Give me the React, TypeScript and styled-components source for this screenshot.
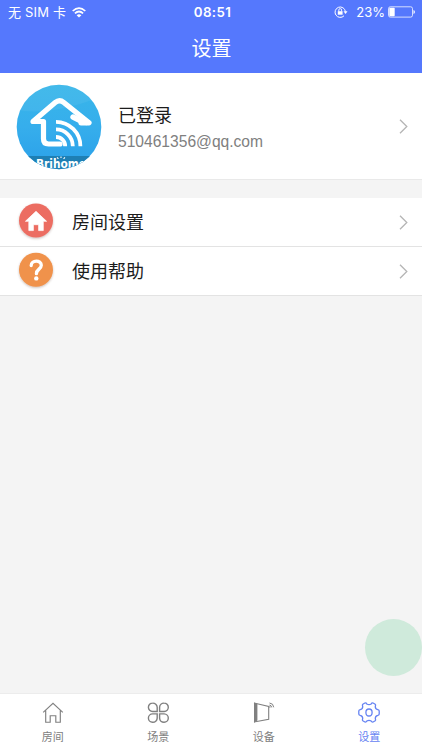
import React from "react";
import styled, { createGlobalStyle } from "styled-components";

const Global = createGlobalStyle`
  * { box-sizing: border-box; }
  html, body { margin: 0; padding: 0; }
  body {
    background: #f4f4f4;
    font-family: "Liberation Sans", "Noto Sans CJK SC", sans-serif;
    overflow: hidden;
  }
  svg { display: block; flex: none; }
`;

const Screen = styled.div`
  width: 422px;
  height: 750px;
  display: flex;
  flex-direction: column;
  position: relative;
  background: #f4f4f4;
`;

const Header = styled.header`
  height: 73px;
  background: #5578fd;
  color: #fff;
`;

const StatusBar = styled.div`
  height: 24px;
  padding: 0 7px 0 8px;
  display: grid;
  grid-template-columns: 1fr auto 1fr;
  align-items: center;
  line-height: 24px;
`;

const StatusGroup = styled.div<{ $end?: boolean }>`
  display: flex;
  align-items: center;
  justify-content: ${(p) => (p.$end ? "flex-end" : "flex-start")};
`;

const Carrier = styled.span`
  font-family: Inter, "Noto Sans CJK SC", sans-serif;
  font-size: 13px;
  letter-spacing: 0.2px;
  margin-right: 6px;
  white-space: nowrap;
`;

const Clock = styled.span`
  font: 600 13.3px/24px Inter, sans-serif;
  letter-spacing: 0.4px;
  padding-left: 2px;
`;

const Percent = styled.span`
  font: 400 13px/24px Inter, sans-serif;
  margin: 0 3px 0 8px;
`;

const Title = styled.h1`
  margin: 0;
  padding: 1px 0 0 1px;
  font-size: 20px;
  font-weight: 400;
  line-height: 49px;
  text-align: center;
`;

const Profile = styled.section`
  height: 107px;
  padding: 1px 14px 0 16px;
  display: flex;
  align-items: center;
  background: #fff;
  border-bottom: 1px solid #e9e9e9;
`;

const ProfileText = styled.div`
  flex: 1;
  padding: 3px 0 0 16px;
`;

const LoginState = styled.div`
  font-size: 18px;
  line-height: 27px;
  color: #1c1c1c;
`;

const Email = styled.div`
  font-size: 15.6px;
  line-height: 24px;
  color: #808080;
`;

const Menu = styled.nav`
  margin-top: 18px;
  background: #fff;
`;

const MenuRow = styled.div`
  height: 49px;
  padding: 0 14px 0 16px;
  display: flex;
  align-items: center;
  border-bottom: 1px solid #e3e3e3;
`;

const MenuLabel = styled.span`
  flex: 1;
  padding: 2px 0 0 16px;
  font-size: 18px;
  line-height: 27px;
  color: #1c1c1c;
`;

const FloatingDot = styled.div`
  position: absolute;
  left: 365px;
  top: 619px;
  width: 57px;
  height: 57px;
  border-radius: 50%;
  background: #cfeadb;
`;

const TabBar = styled.nav`
  height: 57px;
  margin-top: auto;
  display: grid;
  grid-template-columns: repeat(4, 1fr);
  background: #fff;
  border-top: 1px solid #ececec;
`;

const Tab = styled.div<{ $active?: boolean }>`
  display: flex;
  flex-direction: column;
  align-items: center;
  padding-top: 7px;
  color: ${(p) => (p.$active ? "#6583f2" : "#808080")};
`;

const TabLabel = styled.span`
  font-size: 11px;
  line-height: 16px;
  margin-top: 5px;
`;

const Wifi = () => (
  <svg width="14" height="11" viewBox="0 0 14 11" fill="none" stroke="#fff" strokeWidth="1.7">
    <path d="M.7 4Q7-1.9 13.3 4" />
    <path d="M2.9 6.4Q7 2.6 11.1 6.4" />
    <path d="M7 10.6 4.6 8.2Q7 6.2 9.4 8.2Z" fill="#fff" stroke="none" />
  </svg>
);

const RotationLock = () => (
  <svg width="14" height="12" viewBox="0 0 14 12" fill="none" stroke="#fff">
    <path d="M10 9.8A5.2 5.2 0 1 1 11.4 5.5" strokeWidth="1" />
    <path d="M9.5 5.3h4l-2 2.6Z" fill="#fff" stroke="none" />
    <path d="M3.8 5.2h4.8v3.5H3.8z" fill="#fff" stroke="none" />
    <path d="M4.8 5.4V4a1.4 1.4 0 0 1 2.8 0v1.4" strokeWidth=".9" />
  </svg>
);

const Battery = () => (
  <svg width="27" height="12" viewBox="0 0 27 12" fill="none">
    <rect x=".5" y=".8" width="24" height="10.3" rx="1.8" stroke="#fff" strokeOpacity=".75" />
    <rect x="1.3" y="1.7" width="5.4" height="8.5" rx=".8" fill="#fff" />
    <path d="M25.5 4q1.4.5 1.4 2t-1.4 2Z" fill="#fff" />
  </svg>
);

const Avatar = () => (
  <svg width="86" height="86" viewBox="0 0 86 86">
    <defs>
      <linearGradient id="sky" x1="0" y1="0" x2="0" y2="1">
        <stop offset="0" stopColor="#38b6e9" />
        <stop offset=".5" stopColor="#36aeec" />
        <stop offset="1" stopColor="#2a9fe9" />
      </linearGradient>
      <clipPath id="disc">
        <circle cx="43" cy="43" r="42.3" />
      </clipPath>
    </defs>
    <g clipPath="url(#disc)">
      <rect width="86" height="86" fill="url(#sky)" />
      <path d="M0 26Q38 32 86 12V0H0Z" fill="#fff" opacity=".06" />
      <rect y="72" width="86" height="14" fill="#1e7fb4" />
      <g fill="none" stroke="#fff" strokeLinecap="round" strokeLinejoin="round">
        <path d="M44 60H32.5Q27.5 60 27.5 55V37.5H17L39.2 18.6Q43.5 15 47.8 18.6L73 38.8H65" strokeWidth="5.2" />
        <path d="M57 33 66 37.5 70 38.5" strokeWidth="5.4" />
        <g strokeWidth="3.8" strokeLinecap="butt">
          <path d="M40 53A9.2 9.2 0 0 1 49.2 62.2" />
          <path d="M40 45.4A16.8 16.8 0 0 1 56.8 62.2" />
          <path d="M40 37.8A24.4 24.4 0 0 1 64.4 62.2" />
        </g>
      </g>
      <g fill="#fff">
        <text x="20" y="83.5" fontFamily="DejaVu Sans" fontWeight="700" fontSize="11.5" textLength="50" lengthAdjust="spacingAndGlyphs">Brihome</text>
        <path d="M42.4 74.8 41.1 73.4M45 74V72.4M47.6 74.8 48.9 73.4" stroke="#fff" strokeWidth="1.1" />
      </g>
    </g>
  </svg>
);

const IconShadow = () => (
  <filter id="lift" x="-20%" y="-20%" width="140%" height="150%">
    <feDropShadow dx="0" dy="1.1" stdDeviation=".9" floodColor="#58352a" floodOpacity=".32" />
  </filter>
);

const RoomBadge = () => (
  <svg width="40" height="40" viewBox="0 0 40 40">
    <IconShadow />
    <circle cx="20" cy="18.5" r="17" fill="#ec6d62" filter="url(#lift)" />
    <path d="M20 9.3 9.4 19.3H12.8V28.6H17.4V22.7H22.6V28.6H27.3V19.3H30.6Z" fill="#fff" stroke="#fff" strokeWidth=".7" strokeLinejoin="round" />
  </svg>
);

const HelpBadge = () => (
  <svg width="40" height="40" viewBox="0 0 40 40">
    <circle cx="20" cy="18.8" r="17" fill="#f0924b" filter="url(#lift)" />
    <path d="M15.2 14.5C15.2 8.7 25.3 8.5 25.3 14.3C25.3 18.3 20.4 18 20.4 22.7" fill="none" stroke="#fff" strokeWidth="3.3" strokeLinecap="round" />
    <circle cx="20.3" cy="27.4" r="2.2" fill="#fff" />
  </svg>
);

const Chevron = () => (
  <svg width="9" height="15" viewBox="0 0 9 15" fill="none" stroke="#b5b5b5" strokeWidth="1.3">
    <path d="m1 .8 6.8 6.7L1 14.2" />
  </svg>
);

const HomeIcon = () => (
  <svg width="22" height="23" viewBox="0 0 22 23" fill="none" stroke="currentColor" strokeWidth="1.15">
    <path d="M1.2 11.3 11 2.3l9.8 9M3.7 9.3v11.9h4.5v-6.5h5.6v6.5h4.5V9.3" />
  </svg>
);

const SceneIcon = () => (
  <svg width="22" height="23" viewBox="0 0 22 23" fill="none" stroke="currentColor" strokeWidth="1.4">
    <path d="M10.2 10.5H5.6A4.2 4.2 0 0 1 1.4 6.3 4.2 4.2 0 0 1 5.6 2.1 4.4 4.4 0 0 1 10.2 6.3Z" />
    <path d="M12.6 10.5h4.6A4.2 4.2 0 0 0 21.3 6.3 4.2 4.2 0 0 0 17.1 2.1 4.4 4.4 0 0 0 12.6 6.3Z" />
    <path d="M10.2 12.9H5.6A4.2 4.2 0 0 0 1.4 17.1 4.2 4.2 0 0 0 5.6 21.3 4.4 4.4 0 0 0 10.2 17.1Z" />
    <path d="M12.6 12.9h4.6A4.2 4.2 0 0 1 21.3 17.1 4.2 4.2 0 0 1 17.1 21.3 4.4 4.4 0 0 1 12.6 17.1Z" />
  </svg>
);

const DeviceIcon = () => (
  <svg width="22" height="23" viewBox="0 0 22 23" fill="none" stroke="currentColor">
    <path d="M1 1.5 4.4 2.8v16.7L1 21.7Z" fill="currentColor" stroke="none" />
    <path d="M1 2 15.7 5.4v12.8L1 21" strokeWidth="1.1" />
    <path d="M16.5 2q4 .4 4.2 4.3M16.4 4.1q2.1.2 2.3 2.3" strokeWidth="1" />
    <circle cx="16.9" cy="6" r=".7" fill="currentColor" stroke="none" />
  </svg>
);

const GearIcon = () => (
  <svg width="22" height="23" viewBox="0 0 22 23" fill="none" stroke="currentColor" strokeWidth="1.3" strokeLinejoin="round">
    <path d="M6.9 2Q8.2 1.6 8.8 3Q11 4.4 13.2 3Q13.8 1.6 15.1 2L17.2 3.2Q18 4 17.3 5.4Q17.2 8 19.8 8.6Q21.2 9 21.2 10V13Q21.2 14 19.8 14.4Q17.2 15 17.3 17.6Q18 19 17.2 19.8L15.1 21Q13.8 21.4 13.2 20Q11 18.6 8.8 20Q8.2 21.4 6.9 21L4.8 19.8Q4 19 4.7 17.6Q4.8 15 2.2 14.4Q.8 14 .8 13V10Q.8 9 2.2 8.6Q4.8 8 4.7 5.4Q4 4 4.8 3.2Z" />
    <ellipse cx="11" cy="11.5" rx="3.1" ry="3.5" />
  </svg>
);

const rows = [
  { label: "房间设置", Icon: RoomBadge },
  { label: "使用帮助", Icon: HelpBadge },
];

const tabs = [
  { label: "房间", Icon: HomeIcon },
  { label: "场景", Icon: SceneIcon },
  { label: "设备", Icon: DeviceIcon },
  { label: "设置", Icon: GearIcon, active: true },
];

export default function App() {
  return (
    <Screen>
      <Global />
      <Header>
        <StatusBar>
          <StatusGroup>
            <Carrier>无 SIM 卡</Carrier>
            <Wifi />
          </StatusGroup>
          <Clock>08:51</Clock>
          <StatusGroup $end>
            <RotationLock />
            <Percent>23%</Percent>
            <Battery />
          </StatusGroup>
        </StatusBar>
        <Title>设置</Title>
      </Header>
      <Profile>
        <Avatar />
        <ProfileText>
          <LoginState>已登录</LoginState>
          <Email>510461356@qq.com</Email>
        </ProfileText>
        <Chevron />
      </Profile>
      <Menu>
        {rows.map(({ label, Icon }) => (
          <MenuRow key={label}>
            <Icon />
            <MenuLabel>{label}</MenuLabel>
            <Chevron />
          </MenuRow>
        ))}
      </Menu>
      <FloatingDot />
      <TabBar>
        {tabs.map(({ label, Icon, active }) => (
          <Tab key={label} $active={active}>
            <Icon />
            <TabLabel>{label}</TabLabel>
          </Tab>
        ))}
      </TabBar>
    </Screen>
  );
}
